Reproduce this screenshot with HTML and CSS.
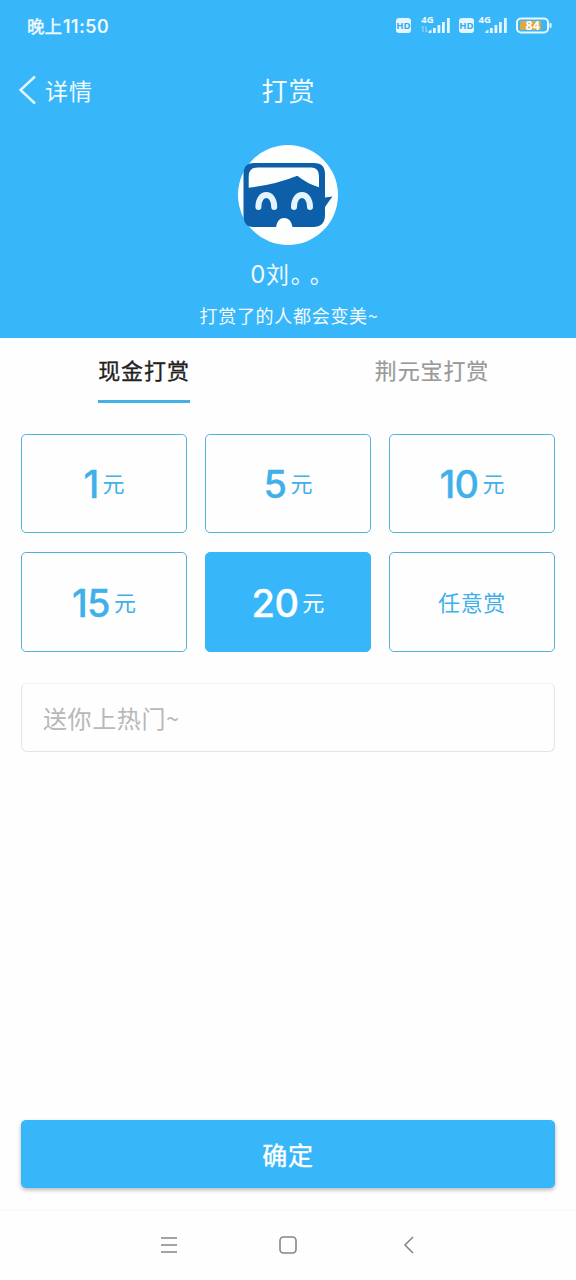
FILE: index.html
```html
<!DOCTYPE html>
<html lang="zh-CN">
<head>
<meta charset="utf-8">
<title>打赏</title>
<link rel="stylesheet" href="styles.css">
</head>
<body>
<div class="screen">
  <header class="hero">
    <div class="status">
      <span class="clock">晚上<b>11:50</b></span>
      <svg class="indicators" width="160" height="24" viewBox="0 0 160 24">
        <g fill="#e4f6ff">
          <rect x="4" y="6" width="15" height="15" rx="3"/>
          <rect x="67" y="6" width="15" height="15" rx="3"/>
          <path d="M36.500 21v-1.500l3-2V21zM41 21v-5h2.800v5zM45.500 21v-8h2.800v8zM50 21V10h2.800v11zM55 21V6h2.800v15z"/>
          <path d="M93.500 21v-1.500l3-2V21zM98 21v-5h2.800v5zM102.500 21v-8h2.800v8zM107 21V10h2.800v11zM112 21V6h2.800v15z"/>
          <rect x="157.500" y="11" width="2" height="5" rx="1"/>
        </g>
        <path d="M31 14v6M29.500 15.500L31 14M34 14v6M35.500 18.500L34 20" fill="none" stroke="#9bdcfd" stroke-width="1"/>
        <rect x="125" y="6.500" width="31" height="14" rx="4" fill="none" stroke="#e9f8ff" stroke-width="2"/>
        <rect x="128" y="9" width="21" height="9" rx="1" fill="#dda744"/>
        <text class="hd" x="11.500" y="17.200">HD</text>
        <text class="hd" x="74.500" y="17.200">HD</text>
        <text class="net" x="35.500" y="11">4G</text>
        <text class="net" x="92.700" y="11">4G</text>
        <text class="charge" x="140.700" y="18.100">84</text>
      </svg>
    </div>
    <nav class="titlebar">
      <a class="back">
        <svg width="20" height="30" viewBox="0 0 20 30"><path d="M17 1.500L2.500 15L17 28.500" fill="none" stroke="#e4f6ff" stroke-width="2.400"/></svg>
        <span>详情</span>
      </a>
      <h1 class="title">打赏</h1>
    </nav>
    <div class="profile">
      <svg class="avatar" width="100" height="100" viewBox="0 0 100 100">
        <circle cx="50" cy="50" r="50" fill="#fdfefe"/>
        <path d="M16 18H76Q87 18 87 29V52.500L94.500 51.500Q91 56 87 62V70Q87 82 75 82H54.500Q53 73 46 73Q39.500 73 38 82H15Q5.500 82 5.500 70V29Q5.500 18 16 18Z" fill="#0c5fa8"/>
        <path d="M10.700 42.700V31Q11 22.500 20 22.500H73Q81 22.500 81 31V42.300Q69 38.500 59.300 30.700Q38 39.500 10.700 42.700Z" fill="#fdfefe"/>
        <path d="M20.400 62C20.400 46 36.200 46 36.200 62M56 62C56 46 72 46 72 62" fill="none" stroke="#e5f3fd" stroke-width="6" stroke-linecap="round"/>
      </svg>
      <div class="name"><span class="digit">0</span>刘<span class="dots">。。</span></div>
      <div class="caption">打赏了的人都会变美~</div>
    </div>
  </header>
  <main class="content">
    <div class="tabs">
      <div class="tab"><span class="tab-label active">现金打赏</span></div>
      <div class="tab"><span class="tab-label">荆元宝打赏</span></div>
    </div>
    <div class="amounts">
      <div class="amount"><b>1</b><span>元</span></div>
      <div class="amount"><b>5</b><span>元</span></div>
      <div class="amount"><b>10</b><span>元</span></div>
      <div class="amount"><b>15</b><span>元</span></div>
      <div class="amount selected"><b>20</b><span>元</span></div>
      <div class="amount custom">任意赏</div>
    </div>
    <div class="message">送你上热门~</div>
    <div class="confirm">确定</div>
  </main>
  <footer class="navbar">
    <svg width="18" height="18" viewBox="0 0 18 18"><path d="M1 2H17M1 9H17M1 16H17"/></svg>
    <svg width="18" height="18" viewBox="0 0 18 18"><rect x="1" y="1" width="16" height="16" rx="3.500"/></svg>
    <svg width="18" height="18" viewBox="0 0 18 18"><path d="M15 1L7 9L15 17"/></svg>
  </footer>
</div>
</body>
</html>
```

FILE: styles.css
```css
* { box-sizing: border-box; }
body {
  margin: 0;
  font-family: "Noto Sans CJK SC", sans-serif;
  background: #fefefe;
}
.screen {
  width: 576px;
  height: 1280px;
  display: flex;
  flex-direction: column;
  overflow: hidden;
}
.hero {
  height: 338px;
  flex: none;
  background: #37b6f9;
  color: #f3fbff;
}
.status {
  height: 52px;
  padding: 0 24px 4px 27px;
  display: flex;
  align-items: center;
  justify-content: space-between;
}
.clock {
  padding-top: 5px;
  font-size: 17.500px;
  line-height: 24px;
  -webkit-text-stroke: .4px currentColor;
}
.clock b {
  margin-left: 1px;
  font-family: Inter, sans-serif;
  font-weight: 500;
  font-size: 18px;
  letter-spacing: .6px;
  -webkit-text-stroke: .2px currentColor;
}
.indicators text { font-family: "Open Sans", sans-serif; font-weight: 700; text-anchor: middle; }
.indicators .hd { font-size: 9.500px; fill: #37a9e6; }
.indicators .net { font-size: 9.500px; fill: #f3fbff; }
.indicators .charge { font-size: 12.500px; fill: #fff; }
.titlebar {
  height: 76px;
  display: grid;
  grid-template-columns: 1fr auto 1fr;
  align-items: center;
  padding-left: 18px;
}
.back {
  display: flex;
  align-items: center;
  gap: 7px;
  font-size: 23px;
  letter-spacing: 1px;
}
.title {
  margin: -2px 17px 0 0;
  font-size: 26px;
  font-weight: 400;
  letter-spacing: 1px;
}
.profile {
  padding-top: 17px;
  display: flex;
  flex-direction: column;
  align-items: center;
}
.name {
  height: 34px;
  margin-top: 12px;
  padding-left: 3px;
  font-size: 23px;
  line-height: 33px;
  letter-spacing: .7px;
  text-spacing-trim: space-all;
}
.digit { font-family: Inter, sans-serif; font-size: 24px; line-height: 1; }
.dots { letter-spacing: -4px; margin-left: 1px; }
.caption {
  margin-top: 10px;
  padding-left: 2px;
  font-size: 18px;
  line-height: 28px;
  letter-spacing: .7px;
}
.content {
  flex: 1;
  display: flex;
  flex-direction: column;
  padding: 0 21px 22px;
}
.tabs {
  height: 96px;
  display: grid;
  grid-template-columns: 1fr 1fr;
  margin: 0 -21px;
}
.tab { text-align: center; }
.tab-label {
  display: inline-block;
  height: 65px;
  line-height: 63px;
  font-size: 22px;
  letter-spacing: .9px;
  color: #999;
  -webkit-text-stroke: .2px currentColor;
}
.tab-label.active {
  color: #222;
  border-bottom: 3px solid #43b0e8;
  -webkit-text-stroke: .3px currentColor;
}
.amounts {
  display: grid;
  grid-template-columns: repeat(3, 166px);
  grid-template-rows: 99px 100px;
  gap: 19px 18px;
}
.amount {
  display: flex;
  align-items: center;
  justify-content: center;
  gap: 4px;
  border: 1px solid #52b0dd;
  border-radius: 5px;
  color: #3fb0ea;
  font-size: 22px;
  padding-bottom: 3px;
}
.amount b {
  padding-top: 4px;
  font-family: Inter, sans-serif;
  font-size: 38px;
  font-weight: 500;
  letter-spacing: -.6px;
  -webkit-text-stroke: .3px currentColor;
}
.amount.selected {
  background: #37b6f9;
  border-color: #37b6f9;
  color: #fff;
}
.custom { letter-spacing: .7px; }
.message {
  height: 69px;
  margin-top: 31px;
  padding-left: 21px;
  border: 1px solid #e5e5e5;
  border-top-color: #f2f2f2;
  border-radius: 6px;
  line-height: 67px;
  font-size: 24px;
  letter-spacing: .6px;
  color: #b8b8b8;
}
.confirm {
  height: 68px;
  margin-top: auto;
  border-radius: 5px;
  background: #37b6f9;
  box-shadow: 0 2px 4px rgba(0, 0, 0, .28);
  color: #fff;
  text-align: center;
  line-height: 68px;
  font-size: 25px;
  letter-spacing: .7px;
  -webkit-text-stroke: .4px currentColor;
}
.navbar {
  height: 70px;
  flex: none;
  border-top: 1px solid #f7f7f7;
  display: flex;
  align-items: center;
  justify-content: center;
  gap: 101px;
  padding-bottom: 1px;
}
.navbar svg { fill: none; stroke: #858585; stroke-width: 1.600; }
```
